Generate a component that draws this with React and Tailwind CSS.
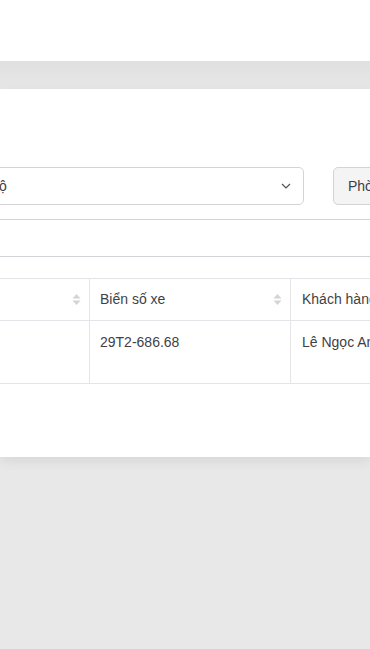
import React from "react";

function SortIcon() {
  return (
    <svg width="9" height="13" viewBox="0 0 9 13" className="shrink-0">
      <path d="M4.5 1 L8.5 5.5 L0.5 5.5 Z" fill="#d4d4d8" />
      <path d="M4.5 12 L8.5 7.5 L0.5 7.5 Z" fill="#d4d4d8" />
    </svg>
  );
}

export default function App() {
  return (
    <div
      className="w-[370px] h-[649px] overflow-hidden bg-[#e8e8e8] flex flex-col"
      style={{ fontFamily: '"Liberation Sans", Arial, sans-serif' }}
    >
      <div className="h-[61px] bg-white shrink-0" />
      <div className="h-[28px] shrink-0 bg-gradient-to-b from-[#dfe0df] to-[#e7e7e7]" />
      <div className="h-[368px] shrink-0 bg-white shadow-[0_4px_12px_rgba(0,0,0,0.08)] relative z-10 overflow-hidden">
        <div className="pt-[78px] flex items-center">
          <div className="ml-[-104px] w-[408px] h-[38px] shrink-0 border border-[#d4d4d8] rounded-[5px] flex items-center justify-between pl-[50px] pr-[12px]">
            <span className="text-[14px] text-[#3f3f46] pl-[10px]">Toàn bộ</span>
            <svg width="10" height="6" viewBox="0 0 10 6">
              <path d="M1 1 L5 5 L9 1" fill="none" stroke="#52525b" strokeWidth="1.2" />
            </svg>
          </div>
          <div className="ml-[29px] h-[38px] shrink-0 border border-[#d4d4d8] rounded-[5px] bg-[#f4f4f5] flex items-center pl-[14px] pr-[14px]">
            <span className="text-[14px] text-[#3f3f46] whitespace-nowrap">Phòng ban</span>
          </div>
        </div>
        <div className="mt-[14px] border-t border-[#d4d4d8] h-[37px]" />
        <div className="border-t border-[#d4d4d8] h-[22px]" />
        <div className="flex border-t border-b border-[#e4e4e9] text-[14px] text-[#3f3f46]">
          <div className="w-[90px] shrink-0 border-r border-[#e4e4e9] flex flex-col">
            <div className="h-[42px] border-b border-[#e4e4e9] flex items-center justify-end pr-[8px]">
              <SortIcon />
            </div>
            <div className="h-[62px]" />
          </div>
          <div className="w-[201px] shrink-0 border-r border-[#e4e4e9] flex flex-col">
            <div className="h-[42px] border-b border-[#e4e4e9] flex items-center justify-between pl-[10px] pr-[8px]">
              <span>Biển số xe</span>
              <SortIcon />
            </div>
            <div className="h-[62px] pl-[10px] pt-[11px]">29T2-686.68</div>
          </div>
          <div className="w-[200px] shrink-0 flex flex-col">
            <div className="h-[42px] border-b border-[#e4e4e9] flex items-center pl-[11px] whitespace-nowrap">
              <span>Khách hàng</span>
            </div>
            <div className="h-[62px] pl-[11px] pt-[11px] whitespace-nowrap">Lê Ngọc Anh</div>
          </div>
        </div>
      </div>
      <div className="flex-1 bg-[#e8e8e8]" />
    </div>
  );
}
